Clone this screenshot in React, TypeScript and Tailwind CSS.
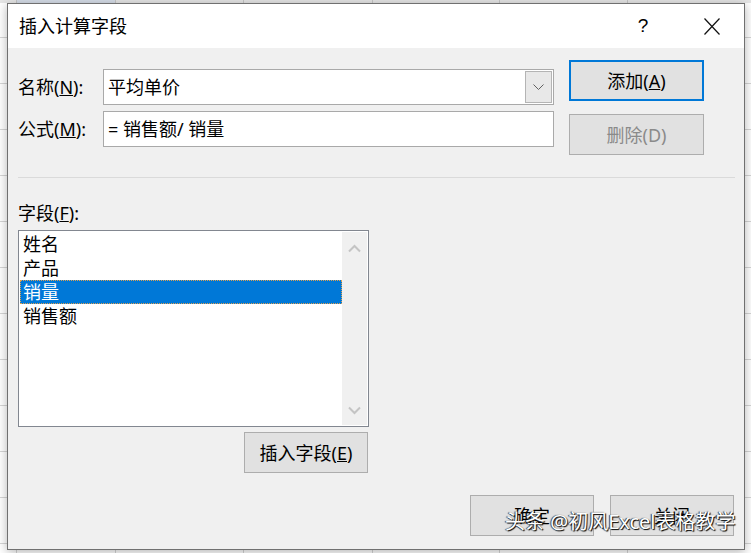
import React from "react";

const FONT = "font-['Noto_Sans','Noto_Sans_CJK_SC',sans-serif]";

const colClasses = [
  "w-[17px]",
  "w-[99px]",
  "w-[128px]",
  "w-[129px]",
  "w-[127px]",
  "w-[128px]",
  "w-[140px]",
];

const rowClasses = [
  "h-[35px]",
  "h-[46px]",
  "h-[46px]",
  "h-[46px]",
  "h-[46px]",
  "h-[46px]",
  "h-[46px]",
  "h-[46px]",
  "h-[46px]",
  "h-[46px]",
  "h-[46px]",
  "h-[46px]",
  "h-[46px]",
];

function ListChevron({ dir }: { dir: "up" | "down" }) {
  return (
    <svg width="13" height="9" viewBox="0 0 13 9" fill="none">
      <path
        d={dir === "up" ? "M1 7.5 L6.5 2 L12 7.5" : "M1 1.5 L6.5 7 L12 1.5"}
        stroke="#c4c4c4"
        strokeWidth="2"
      />
    </svg>
  );
}

function Btn({
  children,
  className = "",
}: {
  children: React.ReactNode;
  className?: string;
}) {
  return (
    <div
      className={`flex items-center justify-center bg-[#e1e1e1] text-[18px] leading-[24px] ${className}`}
    >
      {children}
    </div>
  );
}

export default function App() {
  const fields = ["姓名", "产品", "销量", "销售额"];
  return (
    <div className={`relative w-[751px] h-[553px] overflow-hidden bg-white ${FONT}`}>
      {/* spreadsheet behind the dialog */}
      <div className="flex flex-col">
        <div className="flex h-[3px] bg-[#e6e6e6]">
          {colClasses.map((c, i) => (
            <div
              key={i}
              className={`${c} shrink-0 border-r border-[#c6c6c6] ${i === 1 ? "bg-[#d6dde8]" : ""}`}
            />
          ))}
        </div>
        {rowClasses.map((r, ri) => (
          <div key={ri} className={`flex ${r}`}>
            {colClasses.map((c, i) => (
              <div
                key={i}
                className={`${c} shrink-0 border-r border-b border-[#d6d6d6]`}
              />
            ))}
          </div>
        ))}
      </div>

      {/* dialog window */}
      <div className="absolute left-[7px] top-[3px] w-[738px] h-[547px] border border-[#707070] bg-[#f0f0f0] flex flex-col shadow-[0_2px_10px_rgba(0,0,0,0.3)] text-black">
        {/* title bar */}
        <div className="h-[44px] bg-white flex items-center pl-[11px] pr-[9px]">
          <span className="text-[18px] leading-[24px]">插入计算字段</span>
          <div className="ml-auto flex items-center">
            <div className="w-[46px] text-center text-[19px] leading-[24px] font-['Liberation_Sans',sans-serif] font-light">
              ?
            </div>
            <div className="w-[46px] ml-[23px] flex items-center justify-center">
              <svg width="16" height="17" viewBox="0 0 16 17" fill="none">
                <path d="M0.5 0.5 L15.5 16.5 M15.5 0.5 L0.5 16.5" stroke="#111" strokeWidth="1.2" />
              </svg>
            </div>
          </div>
        </div>

        {/* body */}
        <div className="flex-1 flex flex-col">
          <div className="h-[129px] flex items-start">
            <div className="pl-[10px] pt-[21px] flex flex-col gap-[6px]">
              <div className="flex items-center">
                <div className="w-[85px] text-[18px] leading-[24px]">
                  名称(<u>N</u>):
                </div>
                <div className="w-[451px] h-[36px] border border-[#a9a9a9] bg-white flex items-stretch">
                  <div className="flex-1 flex items-center pl-[4px] text-[18px] leading-[24px]">
                    平均单价
                  </div>
                  <div className="w-[27px] my-[1px] mr-[1px] border border-[#b4b4b4] bg-[#e8e8e8] flex items-center justify-center">
                    <svg width="11" height="6" viewBox="0 0 11 6" fill="none">
                      <path d="M0.5 0.5 L5.5 5.5 L10.5 0.5" stroke="#606060" strokeWidth="1" />
                    </svg>
                  </div>
                </div>
              </div>
              <div className="flex items-center">
                <div className="w-[85px] text-[18px] leading-[24px]">
                  公式(<u>M</u>):
                </div>
                <div className="w-[451px] h-[36px] border border-[#a9a9a9] bg-white flex items-center pl-[4px] text-[18px] leading-[24px]">
                  = 销售额/ 销量
                </div>
              </div>
            </div>
            <div className="ml-[15px] pt-[12px] flex flex-col gap-[13px]">
              <Btn className="w-[135px] h-[41px] border-2 border-[#0078d7]">
                添加(<u>A</u>)
              </Btn>
              <Btn className="w-[135px] h-[41px] border border-[#adadad] text-[#8a8a8a]">
                删除(D)
              </Btn>
            </div>
          </div>

          <div className="h-[1px] bg-[#dadada] ml-[10px] mr-[9px]" />

          <div className="mt-[23px] pl-[10px] text-[18px] leading-[24px]">
            字段(<u>F</u>):
          </div>

          <div className="ml-[10px] mt-[5px] w-[351px] flex flex-col items-end">
            <div className="w-full h-[197px] border border-[#828790] bg-white p-[1px] flex">
              <div className="flex-1 flex flex-col">
                {fields.map((f) => {
                  const sel = f === "销量";
                  return (
                    <div
                      key={f}
                      className={`h-[24px] pl-[3px] text-[18px] leading-[24px] ${
                        sel
                          ? "bg-[#0078d7] text-white outline-1 outline-dotted outline-[#e0a050] -outline-offset-1"
                          : ""
                      }`}
                    >
                      {f}
                    </div>
                  );
                })}
              </div>
              <div className="w-[25px] bg-[#f0f0f0] flex flex-col justify-between items-center pt-[12px] pb-[10px]">
                <ListChevron dir="up" />
                <ListChevron dir="down" />
              </div>
            </div>
            <Btn className="mt-[5px] mr-[1px] w-[124px] h-[41px] border border-[#adadad]">
              插入字段(<u>E</u>)
            </Btn>
          </div>

          <div className="mt-auto flex justify-end gap-[16px] pr-[10px] pb-[13px]">
            <Btn className="w-[124px] h-[41px] border border-[#adadad]">确定</Btn>
            <Btn className="w-[124px] h-[41px] border border-[#adadad]">关闭</Btn>
          </div>
        </div>
      </div>

      {/* watermark */}
      <div className="absolute left-[505px] top-[510px] whitespace-nowrap text-[20px] leading-[24px] text-white [text-shadow:1px_1px_1px_#000,-1px_0_1px_#333]">
        头条 @初风Excel表格教学
      </div>
    </div>
  );
}
